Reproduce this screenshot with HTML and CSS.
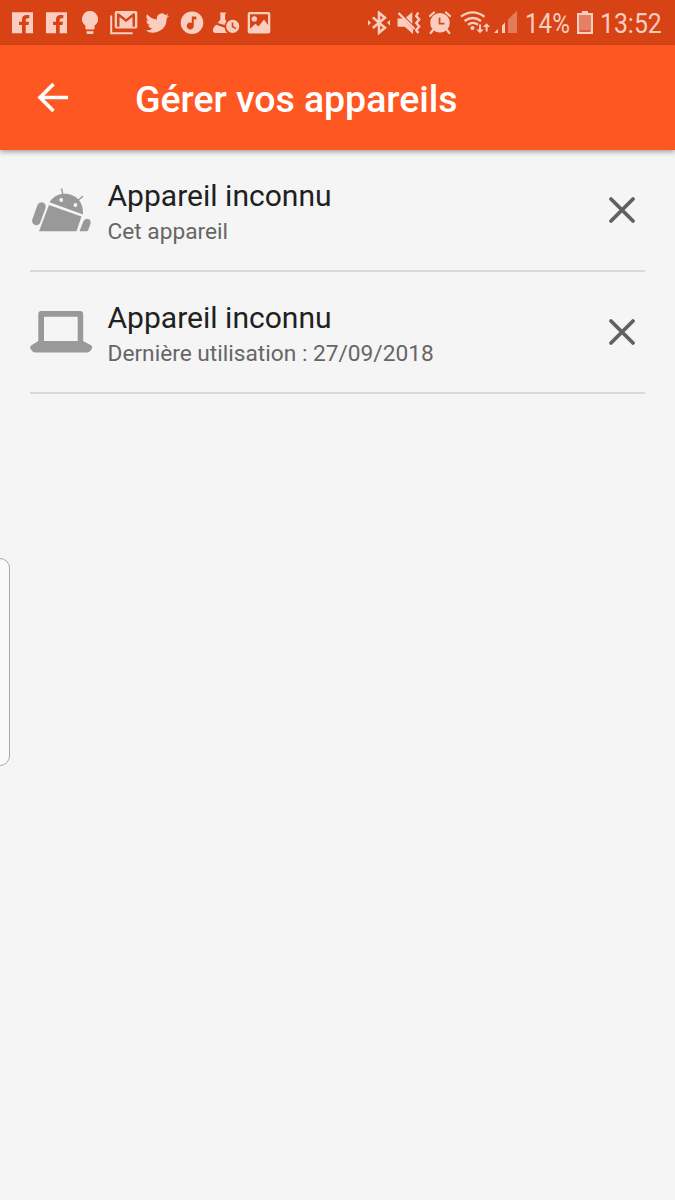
FILE: index.html
```html
<!DOCTYPE html>
<html lang="fr">
  <head>
    <meta charset="utf-8">
    <title>Gérer vos appareils</title>
    <link rel="stylesheet" href="styles.css">
  </head>
  <body>
    <div class="statusbar">
      <div class="notifications">
        <svg width="22" height="24" viewBox="0 0 22 24"><path fill-rule="evenodd" d="M1 1.200h21v21h-7.300v-8.200h2.800l.5-3.200h-3.300V9q0-1.800 1.700-1.800h1.900V4h-2.800q-4.500 0-4.500 4.500v2.300H8V14h3v8.200H1z"/></svg>
        <svg width="22" height="24" viewBox="0 0 22 24"><path fill-rule="evenodd" d="M1 1.200h21v21h-7.300v-8.200h2.800l.5-3.200h-3.300V9q0-1.800 1.700-1.800h1.900V4h-2.800q-4.500 0-4.500 4.500v2.300H8V14h3v8.200H1z"/></svg>
        <svg width="18" height="24" viewBox="0 0 18 24"><path d="M9 0a8 8 0 0 0-4.600 14.500V17q0 1.500 1.500 1.500h6.200q1.500 0 1.500-1.500v-2.500A8 8 0 0 0 9 0zM5.500 20.300h7v1.200q0 1.500-1.500 1.500H7q-1.500 0-1.500-1.500z"/></svg>
        <svg width="28" height="24" viewBox="0 0 28 24"><path d="M1.200 4.500v17.800h21.500" fill="none" stroke="#f9cdc0" stroke-width="2"/><path fill-rule="evenodd" d="M6.500 0h19q1.800 0 1.800 1.800v14q0 1.800-1.800 1.800h-19q-1.800 0-1.800-1.800v-14Q4.700 0 6.500 0zM7 2.500v13.200h2.500V6l6.500 5 6.500-5v9.700H25V2.500h-2L16 8 9 2.500z"/></svg>
        <svg width="25" height="24" viewBox="0 0 24 24"><path d="M23.600 4.700a9.600 9.600 0 0 1-2.800.8 4.900 4.900 0 0 0 2.100-2.700 9.700 9.700 0 0 1-3.100 1.200 4.850 4.850 0 0 0-8.300 4.400A13.800 13.800 0 0 1 1.600 3.300a4.850 4.850 0 0 0 1.500 6.500 4.800 4.800 0 0 1-2.200-.6 4.900 4.900 0 0 0 3.900 4.800 4.900 4.900 0 0 1-2.200.1 4.900 4.900 0 0 0 4.500 3.400A9.700 9.700 0 0 1 0 19.500a13.700 13.700 0 0 0 21.100-12.200a9.800 9.800 0 0 0 2.500-2.600z"/></svg>
        <svg width="24" height="24" viewBox="0 0 24 24"><path fill-rule="evenodd" d="M12 .5a11.300 11.300 0 1 0 0 22.600A11.300 11.300 0 0 0 12 .5zM11.800 5.500h4.500v3h-2.600v6.700a3.500 3.500 0 1 1-1.900-3.300z"/></svg>
        <svg width="28" height="24" viewBox="0 0 28 24"><path d="M8.300 1.500h5.400V3h-.6v5.300l1.200 2.200a7.500 7.500 0 0 0-1.700 3.500L5.700 12l2.700-3.500V3h-.1zM4.200 13.700l8.400 3q.3 3 2.400 5.300H3.500Q.7 22 .9 18.800q.4-3 3.300-5.100z"/><path fill-rule="evenodd" d="M20.700 8.700a6.600 6.600 0 1 0 0 13.200 6.600 6.600 0 0 0 0-13.200zm-1 2.800h1.600V15l3 1.900-.8 1.300-3.800-2.300z"/></svg>
        <svg width="24" height="24" viewBox="0 0 24 24"><path fill-rule="evenodd" d="M2.700 1h18.600q2 0 2 2v17.500q0 2-2 2H2.700q-2 0-2-2V3q0-2 2-2zM3 3.200v14.500l5.500-5 3 2.700 5.500-7 4 5.500V3.200zM7.300 5.200a2.700 2.700 0 1 1 0 5.400 2.700 2.700 0 0 1 0-5.400z"/></svg>
      </div>
      <div class="system">
        <svg width="22" height="24" viewBox="0 0 22 24"><path d="M4.800 6.400 17 16.800l-6 5V1.700l6 5L4.800 17" fill="none" stroke="#f9cdc0" stroke-width="2.500"/><path d="m0 9 3 2.700-3 2.700zM22 9l-3 2.700 3 2.700z"/></svg>
        <svg class="mute" width="24" height="24" viewBox="0 0 24 24"><path d="M.5 7.500h5.500L16 18.500V23l-8.300-7.200H.5zM9 6.500 15.300 1v12z"/><path d="m1.500 2 16 16M21.200 1.500l-2 3.500 3 3.500-3 3.500 3 3.500-3 3.500 2.200 3" fill="none" stroke="#f9cdc0" stroke-width="2.400"/></svg>
        <svg class="alarm" width="22" height="24" viewBox="0 0 22 24"><path fill-rule="evenodd" d="M11 2a9.800 9.800 0 1 0 0 19.600A9.800 9.800 0 0 0 11 2zM9.700 6.500h1.700v5.300h4v1.700H9.700z"/><path d="m1 5 4-3.500M21 5l-4-3.500M4 19l-2.300 3M18 19l2.300 3" fill="none" stroke="#f9cdc0" stroke-width="2.200" stroke-linecap="round"/></svg>
        <svg class="wifi" width="30" height="24" viewBox="0 0 30 24"><path d="M1 5.700Q12.500-3 24.500 5.700M4.500 10q8.300-6 16.500 0M8 13.700q5-3.500 10 0" fill="none" stroke="#f9cdc0" stroke-width="2.300"/><circle cx="12.500" cy="17" r="2"/><path d="M19 13.500h2v5h2.700L20 22.300l-3.700-3.800H19zM25.600 20.500h2V16H30l-3.400-3.800-3.600 3.800h2.600z"/></svg>
        <svg class="signal" width="23" height="24" viewBox="0 0 23 24"><path d="M0 22h4v-4zM8 22h3V11.500L8 14.500z"/><path opacity=".4" d="M14 22h9V-.500L14 8.500z"/></svg>
        <span class="percent"><b>14%</b></span>
        <svg class="battery" width="16" height="24" viewBox="0 0 16 24"><path opacity=".45" d="M2 4h12v17H2z"/><path fill-rule="evenodd" d="M5 0h6v2h5v21H0V2h5zM2 4v17h12V4z"/><path fill="#d5303a" d="M3 19.500h10v1H3z"/></svg>
        <span class="clock"><b>13:52</b></span>
      </div>
    </div>

    <div class="header">
      <svg class="back" width="32" height="32" viewBox="0 0 32 32"><path d="M16.500 2 3 15.500 16.500 29M3 15.500h28" fill="none" stroke="#fff" stroke-width="3.600"/></svg>
      <h1>Gérer vos appareils</h1>
    </div>

    <ul class="devices">
      <li class="device">
        <svg class="icon" width="63" height="50" viewBox="0 0 63 50">
          <path d="M19.500 16.200Q25.500 6.800 37 7.800q16.500 3 16 20.800zM19 19l32.500 11.500L46.500 45.200H9zM53 36q2-4.500 6-2.700 2.400 1.500 1.400 4.700l-2.200 6q-.5 1.200-1.700 1.200h-7z"/>
          <path d="M33 9l-1.500-6.500M48 14.500l5-4.500" fill="none" stroke="#999" stroke-width="1.400"/>
          <path d="M11.500 20.500 6.300 35" stroke="#999" stroke-width="8.500" stroke-linecap="round"/>
          <circle class="eye" cx="31.200" cy="14" r="1.900"/>
          <circle class="eye" cx="45.400" cy="19" r="1.900"/>
        </svg>
        <div class="info">
          <div class="name">Appareil inconnu</div>
          <div class="detail">Cet appareil</div>
        </div>
        <svg class="close" width="28" height="28" viewBox="0 0 28 28"><path d="M3 3l22 22M25 3 3 25"/></svg>
      </li>
      <li class="device">
        <svg class="icon" width="63" height="50" viewBox="0 0 63 50"><path fill-rule="evenodd" d="M11.500 3h38.500q3.200 0 3.200 3.200V33l8.200 4.500q1.200 1.200.4 3.200-2 3.700-4.500 3.700H5.200q-2.500 0-4.700-3.700-.8-2 .6-3.200L8.300 33V6.200Q8.300 3 11.500 3zM14 8.800V33h33.700V8.800z"/></svg>
        <div class="info">
          <div class="name">Appareil inconnu</div>
          <div class="detail">Dernière utilisation : 27/09/2018</div>
        </div>
        <svg class="close" width="28" height="28" viewBox="0 0 28 28"><path d="M3 3l22 22M25 3 3 25"/></svg>
      </li>
    </ul>

    <div class="edge-handle"></div>
  </body>
</html>
```
FILE: styles.css
```css
* {
  box-sizing: border-box;
}
body {
  margin: 0;
  min-height: 1200px;
  background-color: #f5f5f5;
  font-family: Roboto, "Liberation Sans", sans-serif;
}
svg {
  display: block;
  flex: none;
}
.statusbar {
  height: 45px;
  display: flex;
  justify-content: space-between;
  background-color: #d84315;
  color: #f9cdc0;
  fill: #f9cdc0;
}
.notifications {
  display: grid;
  grid-template-columns: repeat(8, 33.900px);
  justify-items: center;
  padding: 11px 0 0 5.300px;
}
.system {
  display: flex;
  padding: 11px 13px 0 0;
}
.mute {
  margin-left: 7px;
}
.alarm {
  margin-left: 8px;
}
.wifi {
  margin-left: 9px;
}
.signal {
  margin-left: 4px;
}
.percent, .clock {
  font-size: 28.500px;
  line-height: 26px;
  white-space: nowrap;
}
.percent {
  width: 44px;
  margin-left: 8px;
}
.clock {
  width: 62px;
  margin-left: 7px;
}
.percent b, .clock b {
  display: inline-block;
  font-weight: 400;
  transform: scaleX(0.85);
  transform-origin: left;
}
.clock b {
  transform: scaleX(0.87);
}
.battery {
  margin-left: 8px;
}
.header {
  height: 105px;
  display: flex;
  align-items: center;
  padding-left: 37px;
  background-color: #ff5722;
  box-shadow: 0 2px 5px rgba(0, 0, 0, 0.35);
}
h1 {
  margin: 2px 0 0 66px;
  color: #fff;
  font-size: 37.500px;
  font-weight: 500;
  letter-spacing: -0.05px;
  white-space: nowrap;
}
.devices {
  margin: 0;
  padding: 0 30px;
  list-style: none;
}
.device {
  height: 122px;
  display: flex;
  align-items: flex-start;
  padding-top: 36px;
  border-bottom: 2px solid #d8d8d8;
}
.icon {
  fill: #999;
}
.eye {
  fill: #f5f5f5;
}
.info {
  flex: 1;
  margin: -9px 0 0 14.500px;
}
.name {
  color: #212121;
  font-size: 30.050px;
  line-height: 38px;
}
.detail {
  color: #666;
  font-size: 22.700px;
  line-height: 34px;
}
.close {
  margin: 10px 9px 0 0;
  fill: none;
  stroke: #606060;
  stroke-width: 3.800;
  stroke-linecap: round;
}
.edge-handle {
  position: absolute;
  left: -12px;
  top: 558px;
  width: 22px;
  height: 208px;
  border: 1px solid #aaa;
  border-radius: 10px;
  background-color: #fafafa;
}
```
